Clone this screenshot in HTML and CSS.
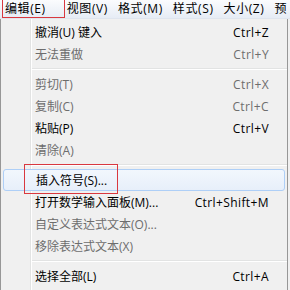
FILE: index.html
```html
<!DOCTYPE html>
<html lang="zh">
<head>
    <meta charset="UTF-8">
    <title>编辑菜单</title>
    <link rel="stylesheet" href="styles.css">
</head>
<body>

  <div class="menubar">
    <span class="top-item marked">编辑(E)</span>
    <span class="top-item">视图(V)</span>
    <span class="top-item">格式(M)</span>
    <span class="top-item">样式(S)</span>
    <span class="top-item">大小(Z)</span>
    <span class="top-item">预</span>
  </div>

  <div class="menu">
    <div class="row"><span class="label">撤消(U) 键入</span><span class="key">Ctrl+Z</span></div>
    <div class="row off"><span class="label">无法重做</span><span class="key">Ctrl+Y</span></div>
    <div class="sep"></div>
    <div class="row off"><span class="label">剪切(T)</span><span class="key">Ctrl+X</span></div>
    <div class="row off"><span class="label">复制(C)</span><span class="key">Ctrl+C</span></div>
    <div class="row"><span class="label">粘贴(P)</span><span class="key">Ctrl+V</span></div>
    <div class="row off"><span class="label">清除(A)</span><span class="key"></span></div>
    <div class="sep"></div>
    <div class="row hover">
      <span class="label">插入符号(S)...</span><span class="key"></span>
      <div class="mark-box"></div>
    </div>
    <div class="row"><span class="label">打开数学输入面板(M)...</span><span class="key">Ctrl+Shift+M</span></div>
    <div class="row off"><span class="label">自定义表达式文本(O)...</span><span class="key"></span></div>
    <div class="row off"><span class="label">移除表达式文本(X)</span><span class="key"></span></div>
    <div class="sep"></div>
    <div class="row"><span class="label">选择全部(L)</span><span class="key">Ctrl+A</span></div>
  </div>

</body>
</html>
```

FILE: styles.css
```css
body {
    margin: 0;
    width: 290px;
    height: 290px;
    overflow: hidden;
    background-color: #f0f0f0;
    font-family: "Open Sans", "Noto Sans CJK SC", sans-serif;
    font-size: 12px;
    color: #000;
}

.menubar {
    display: flex;
    height: 18px;
    background: linear-gradient(#fbfcfe, #e6ecf5);
    border-bottom: 1px solid #dfe5ee;
    white-space: nowrap;
}

.top-item {
    line-height: 17px;
    padding: 0 5px;
    letter-spacing: 0.6px;
}

.top-item.marked {
    margin-left: 2px;
    margin-right: -3px;
    padding: 0 18px 0 2px;
    border: 1px solid #d9383f;
    border-top: none;
    height: 17px;
}

.menu {
    position: relative;
    margin: 0 2px 0 0;
    padding: 2px 0 0 0;
    height: 269px;
    border-left: 1px solid #979797;
    border-right: 1px solid #979797;
    background: linear-gradient(to right, #f0f0f0 29px, #e2e3e3 29px, #e2e3e3 30px, #ffffff 30px, #ffffff 31px, #f0f0f0 31px);
}

.row {
    position: relative;
    display: flex;
    justify-content: space-between;
    align-items: center;
    height: 22px;
    padding: 0 18px 0 34px;
    white-space: nowrap;
}

.key {
    letter-spacing: 0.4px;
}

.row.off {
    color: #6d6d6d;
}

.row.hover {
    margin: 0 2px;
    padding: 0 16px 0 32px;
    border: 1px solid #aecff7;
    border-radius: 3px;
    height: 20px;
    background: linear-gradient(#f2f7fd, #e7effa);
}

.mark-box {
    position: absolute;
    left: 20px;
    top: -6px;
    width: 92px;
    height: 28px;
    border: 1px solid #d9383f;
}

.sep {
    height: 8px;
    margin-left: 31px;
    background: linear-gradient(#f0f0f0 3px, #e2e3e3 3px, #e2e3e3 4px, #ffffff 4px, #ffffff 5px, #f0f0f0 5px);
}
```
